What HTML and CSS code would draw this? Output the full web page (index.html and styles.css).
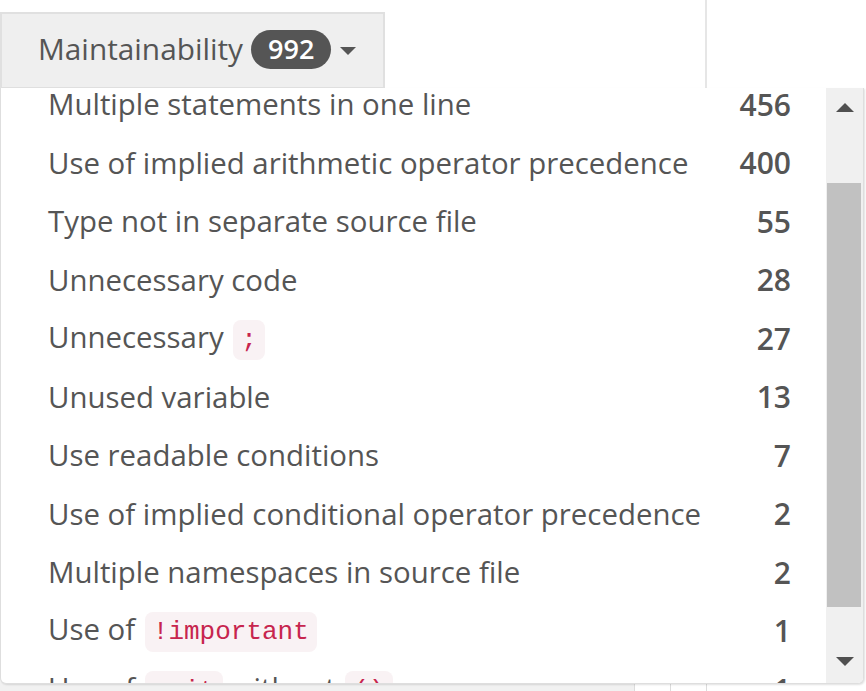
FILE: index.html
```html
<!DOCTYPE html>
<html lang="en">
<head>
<meta charset="utf-8">
<title>Maintainability</title>
<link rel="stylesheet" href="styles.css">
</head>
<body>
<div class="page">
  <div class="top">
    <div class="toolbar">
      <div class="filter">
        <span class="filter-label">Maintainability</span>
        <span class="badge">992</span>
        <span class="caret"></span>
      </div>
    </div>
    <div class="top-right"></div>
  </div>
  <div class="table">
    <div class="cell grey"></div>
    <div class="cell"></div>
    <div class="cell"></div>
    <div class="cell"></div>
  </div>

  <div class="dropdown">
    <div class="list">
      <div class="rows">
        <div class="row"><span class="label">Multiple statements in one line</span><span class="count">456</span></div>
        <div class="row"><span class="label">Use of implied arithmetic operator precedence</span><span class="count">400</span></div>
        <div class="row"><span class="label">Type not in separate source file</span><span class="count">55</span></div>
        <div class="row"><span class="label">Unnecessary code</span><span class="count">28</span></div>
        <div class="row"><span class="label">Unnecessary <code>;</code></span><span class="count">27</span></div>
        <div class="row"><span class="label">Unused variable</span><span class="count">13</span></div>
        <div class="row"><span class="label">Use readable conditions</span><span class="count">7</span></div>
        <div class="row"><span class="label">Use of implied conditional operator precedence</span><span class="count">2</span></div>
        <div class="row"><span class="label">Multiple namespaces in source file</span><span class="count">2</span></div>
        <div class="row"><span class="label">Use of <code>!important</code></span><span class="count">1</span></div>
        <div class="row"><span class="label">Use of <code>exit</code> without <code>()</code></span><span class="count">1</span></div>
      </div>
    </div>
    <div class="scrollbar">
      <div class="sb-btn sb-up"><span class="tri-up"></span></div>
      <div class="sb-track"><div class="sb-thumb"></div></div>
      <div class="sb-btn sb-down"><span class="tri-down"></span></div>
    </div>
  </div>
</div>
</body>
</html>
```

FILE: styles.css
```css
* { box-sizing: border-box; }

html, body {
  margin: 0;
  padding: 0;
  background: #fff;
}

body {
  font-family: "Open Sans", "Liberation Sans", sans-serif;
  color: #555;
}

.page {
  position: relative;
  width: 866px;
  height: 691px;
  overflow: hidden;
}

/* top toolbar */
.top {
  display: flex;
  height: 88px;
}

.toolbar {
  width: 705px;
  padding-top: 12px;
}

.filter {
  display: flex;
  align-items: center;
  width: 385px;
  height: 76px;
  padding-left: 36px;
  background: #efefef;
  border: 2px solid #e0e0e0;
  border-bottom-width: 1px;
}

.filter-label {
  font-size: 29.8px;
  color: #555;
  margin-top: -4px;
}

.badge {
  margin-left: 8px;
  height: 39px;
  padding: 0 17px;
  border-radius: 20px;
  background: #555;
  color: #fff;
  font-weight: 600;
  font-size: 27px;
  line-height: 38px;
  margin-top: -3px;
}

.caret {
  margin-left: 9px;
  width: 0;
  height: 0;
  border-left: 8px solid transparent;
  border-right: 8px solid transparent;
  border-top: 8px solid #555;
}

.top-right {
  flex: 1;
  border-left: 2px solid #e6e6e6;
}

/* background table */
.table {
  display: grid;
  grid-template-columns: 634px 36px 36px 1fr;
  height: 603px;
}

.cell {
  border-left: 1px solid #dcdcdc;
}

.cell.grey {
  background: #f1f1f1;
  border-left: none;
}

/* dropdown */
.dropdown {
  position: absolute;
  top: 88px;
  left: 0;
  width: 864px;
  height: 596px;
  display: flex;
  background: #fff;
  border: 1px solid #dedede;
  border-top: none;
  border-radius: 0 0 6px 6px;
  box-shadow: 1px 1px 2px rgba(0, 0, 0, 0.12);
  overflow: hidden;
}

.list {
  flex: 1;
  overflow: hidden;
  padding: 0 35px 0 47px;
}

.rows {
  margin-top: -13px;
}

.row {
  display: flex;
  align-items: center;
  justify-content: space-between;
  height: 58.5px;
  font-size: 29.4px;
  white-space: nowrap;
}

.label {
  color: #555;
}

.count {
  font-weight: 600;
  font-size: 30px;
  color: #555;
}

code {
  display: inline-block;
  font-family: "Liberation Mono", "DejaVu Sans Mono", monospace;
  font-size: 26px;
  line-height: 40px;
  padding: 0 8px;
  margin-left: 2px;
  border-radius: 8px;
  background: #f9f2f4;
  color: #c7254e;
  vertical-align: middle;
}

/* fake scrollbar */
.scrollbar {
  width: 37px;
  display: flex;
  flex-direction: column;
  background: #f0f0f0;
}

.sb-btn {
  display: flex;
  justify-content: center;
  align-items: center;
}

.sb-up {
  height: 39px;
}

.sb-down {
  height: 43px;
}

.sb-track {
  flex: 1;
  padding: 56px 2px 0 1px;
}

.sb-thumb {
  height: 424px;
  background: #c1c1c1;
}

.tri-up {
  width: 0;
  height: 0;
  border-left: 9px solid transparent;
  border-right: 9px solid transparent;
  border-bottom: 9px solid #505050;
}

.tri-down {
  width: 0;
  height: 0;
  border-left: 9px solid transparent;
  border-right: 9px solid transparent;
  border-top: 9px solid #505050;
}
```
